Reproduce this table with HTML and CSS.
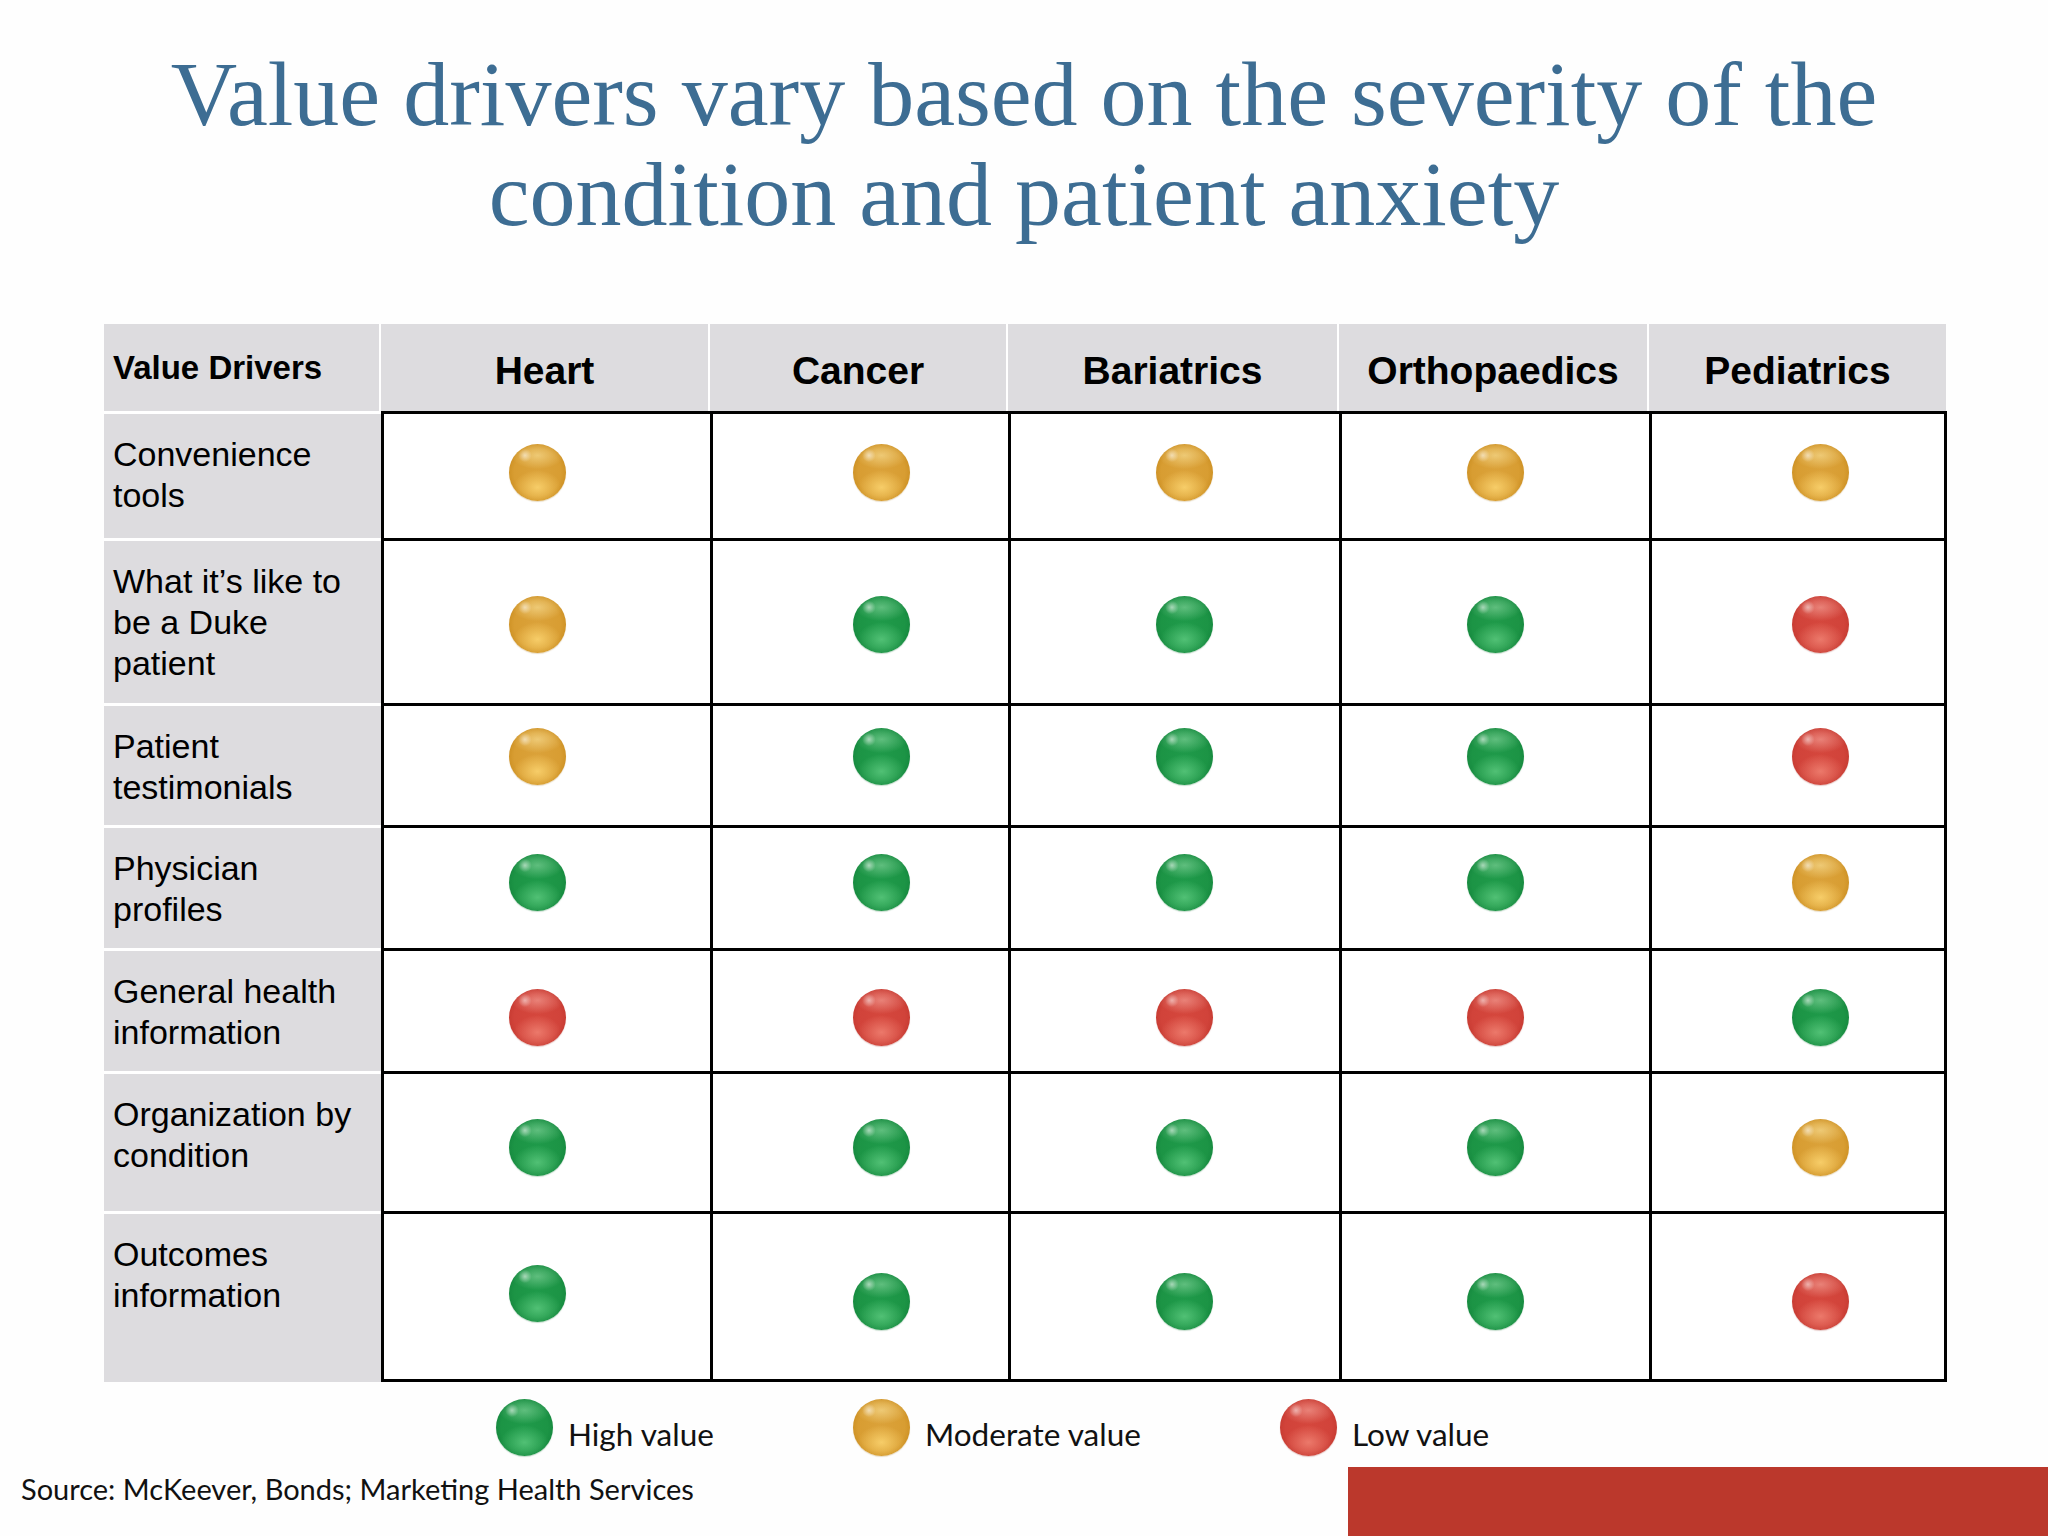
FILE: index.html
```html
<!DOCTYPE html>
<html lang="en">
<head>
<meta charset="utf-8">
<title>Value drivers</title>
<link rel="stylesheet" href="styles.css">
</head>
<body>
<div class="slide">
  <h1 class="title">Value drivers vary based on the severity of the<br>condition and patient anxiety</h1>

  <div class="grid">
    <div class="hd hd-first">Value Drivers</div>
    <div class="hd hd-col">Heart</div>
    <div class="hd hd-col">Cancer</div>
    <div class="hd hd-col">Bariatrics</div>
    <div class="hd hd-col">Orthopaedics</div>
    <div class="hd hd-col hd-last">Pediatrics</div>

    <div class="lbl">Convenience<br>tools</div>
    <div class="cell r1 c1"><span class="dot gold"></span></div>
    <div class="cell r1 c2"><span class="dot gold"></span></div>
    <div class="cell r1 c3"><span class="dot gold"></span></div>
    <div class="cell r1 c4"><span class="dot gold"></span></div>
    <div class="cell r1 c5"><span class="dot gold"></span></div>

    <div class="lbl">What it’s like to<br>be a Duke<br>patient</div>
    <div class="cell r2 c1"><span class="dot gold"></span></div>
    <div class="cell r2 c2"><span class="dot green"></span></div>
    <div class="cell r2 c3"><span class="dot green"></span></div>
    <div class="cell r2 c4"><span class="dot green"></span></div>
    <div class="cell r2 c5"><span class="dot red"></span></div>

    <div class="lbl">Patient<br>testimonials</div>
    <div class="cell r3 c1"><span class="dot gold"></span></div>
    <div class="cell r3 c2"><span class="dot green"></span></div>
    <div class="cell r3 c3"><span class="dot green"></span></div>
    <div class="cell r3 c4"><span class="dot green"></span></div>
    <div class="cell r3 c5"><span class="dot red"></span></div>

    <div class="lbl">Physician<br>profiles</div>
    <div class="cell r4 c1"><span class="dot green"></span></div>
    <div class="cell r4 c2"><span class="dot green"></span></div>
    <div class="cell r4 c3"><span class="dot green"></span></div>
    <div class="cell r4 c4"><span class="dot green"></span></div>
    <div class="cell r4 c5"><span class="dot gold"></span></div>

    <div class="lbl">General health<br>information</div>
    <div class="cell r5 c1"><span class="dot red"></span></div>
    <div class="cell r5 c2"><span class="dot red"></span></div>
    <div class="cell r5 c3"><span class="dot red"></span></div>
    <div class="cell r5 c4"><span class="dot red"></span></div>
    <div class="cell r5 c5"><span class="dot green"></span></div>

    <div class="lbl">Organization by<br>condition</div>
    <div class="cell r6 c1"><span class="dot green"></span></div>
    <div class="cell r6 c2"><span class="dot green"></span></div>
    <div class="cell r6 c3"><span class="dot green"></span></div>
    <div class="cell r6 c4"><span class="dot green"></span></div>
    <div class="cell r6 c5"><span class="dot gold"></span></div>

    <div class="lbl">Outcomes<br>information</div>
    <div class="cell r7 c1"><span class="dot green"></span></div>
    <div class="cell r7 c2"><span class="dot green"></span></div>
    <div class="cell r7 c3"><span class="dot green"></span></div>
    <div class="cell r7 c4"><span class="dot green"></span></div>
    <div class="cell r7 c5"><span class="dot red"></span></div>
  </div>

  <div class="legend">
    <div class="leg-item"><span class="dot green"></span><span class="leg-text">High value</span></div>
    <div class="leg-item"><span class="dot gold"></span><span class="leg-text">Moderate value</span></div>
    <div class="leg-item"><span class="dot red"></span><span class="leg-text">Low value</span></div>
  </div>

  <div class="footer">
    <div class="source">Source: McKeever, Bonds; Marketing Health Services</div>
    <div class="bar"></div>
  </div>
</div>
</body>
</html>
```

FILE: styles.css
```css
html, body {
  margin: 0;
  padding: 0;
  background: #ffffff;
}

.slide {
  width: 2048px;
  height: 1536px;
  overflow: hidden;
  display: flex;
  flex-direction: column;
  background: #fefefe;
}

.title {
  margin: 44px 0 0;
  font-family: "Liberation Serif", "Times New Roman", serif;
  font-weight: normal;
  font-size: 92px;
  line-height: 100px;
  color: #3d6d93;
  text-align: center;
}

.grid {
  margin: 80px 0 0 104px;
  display: grid;
  grid-template-columns: 277px 329px 298px 331px 310px 298px;
  grid-template-rows: 87px 127px 165px 122px 123px 123px 140px 171px;
  font-family: "Liberation Sans", Arial, sans-serif;
  color: #000;
}

.hd {
  background: #dddcdf;
  box-sizing: border-box;
  border-right: 2px solid #fff;
  display: flex;
  align-items: center;
  font-weight: bold;
}

.hd-first {
  font-size: 33px;
  padding-left: 9px;
}

.hd-col {
  justify-content: center;
  font-size: 39px;
  padding-top: 7px;
}

.hd-last {
  border-right: none;
  margin-right: 1px;
}

.lbl {
  background: #dddcdf;
  box-sizing: border-box;
  border-top: 3px solid #fff;
  padding: 20px 0 0 9px;
  font-size: 34px;
  line-height: 41px;
  white-space: nowrap;
}

.cell {
  box-sizing: border-box;
  border-left: 3px solid #000;
  border-top: 3px solid #000;
  background: #fff;
  display: flex;
  align-items: center;
  justify-content: flex-start;
}

.c1 { padding-left: 125px; }
.c2 { padding-left: 140px; }
.c3 { padding-left: 145px; }
.c4 { padding-left: 125px; }
.c5 { padding-left: 140px; border-right: 3px solid #000; }
.r7 { border-bottom: 3px solid #000; }

.r1 .dot { margin-top: -8px; }
.r2 .dot { margin-top: 5px; }
.r3 .dot { margin-top: -19px; }
.r4 .dot { margin-top: -12px; }
.r5 .dot { margin-top: 13px; }
.r6 .dot { margin-top: 9px; }
.r7 .dot { margin-top: 9px; }
.r7.c1 .dot { margin-top: -6px; }

.dot {
  display: block;
  flex: none;
  width: 57px;
  height: 57px;
  border-radius: 50%;
}

.gold {
  background:
    radial-gradient(circle at 28% 20%, rgba(255,255,255,0.55) 0, rgba(255,255,255,0) 11%),
    radial-gradient(ellipse 46% 24% at 50% 20%, rgba(255,236,170,0.55), rgba(255,236,170,0) 100%),
    radial-gradient(ellipse 42% 30% at 50% 76%, rgba(250,210,110,0.9), rgba(250,210,110,0) 100%),
    radial-gradient(circle at 50% 50%, #dba23a 0, #d89d32 58%, #c48618 88%, #b27510 100%);
  box-shadow: 0 1px 1px rgba(160,110,20,0.25);
}

.green {
  background:
    radial-gradient(circle at 28% 20%, rgba(255,255,255,0.55) 0, rgba(255,255,255,0) 11%),
    radial-gradient(ellipse 46% 24% at 50% 20%, rgba(160,230,180,0.5), rgba(160,230,180,0) 100%),
    radial-gradient(ellipse 42% 30% at 50% 76%, rgba(90,200,125,0.85), rgba(90,200,125,0) 100%),
    radial-gradient(circle at 50% 50%, #1f9a4a 0, #1c9445 58%, #11803a 88%, #0c6c2f 100%);
  box-shadow: 0 1px 1px rgba(20,110,50,0.25);
}

.red {
  background:
    radial-gradient(circle at 28% 20%, rgba(255,255,255,0.5) 0, rgba(255,255,255,0) 11%),
    radial-gradient(ellipse 46% 24% at 50% 20%, rgba(255,190,180,0.5), rgba(255,190,180,0) 100%),
    radial-gradient(ellipse 42% 30% at 50% 76%, rgba(240,130,115,0.85), rgba(240,130,115,0) 100%),
    radial-gradient(circle at 50% 50%, #d5473d 0, #d1433a 58%, #bd332a 88%, #a82a22 100%);
  box-shadow: 0 1px 1px rgba(150,40,30,0.25);
}

.legend {
  margin: 17px 0 0 496px;
  display: grid;
  grid-template-columns: 357px 427px auto;
  height: 57px;
}

.leg-item {
  display: flex;
  align-items: flex-start;
}

.leg-text {
  margin: 17px 0 0 15px;
  font-family: Lato, "Liberation Sans", sans-serif;
  font-size: 31.5px;
  line-height: 37px;
  color: #111;
  white-space: nowrap;
}

.footer {
  margin-top: 11px;
  display: flex;
  justify-content: space-between;
  align-items: flex-start;
  height: 69px;
}

.source {
  margin: 5px 0 0 21px;
  font-family: Lato, "Liberation Sans", sans-serif;
  font-size: 29px;
  line-height: 34px;
  color: #111;
  white-space: nowrap;
}

.bar {
  width: 700px;
  height: 69px;
  background: #bb382c;
}
```
